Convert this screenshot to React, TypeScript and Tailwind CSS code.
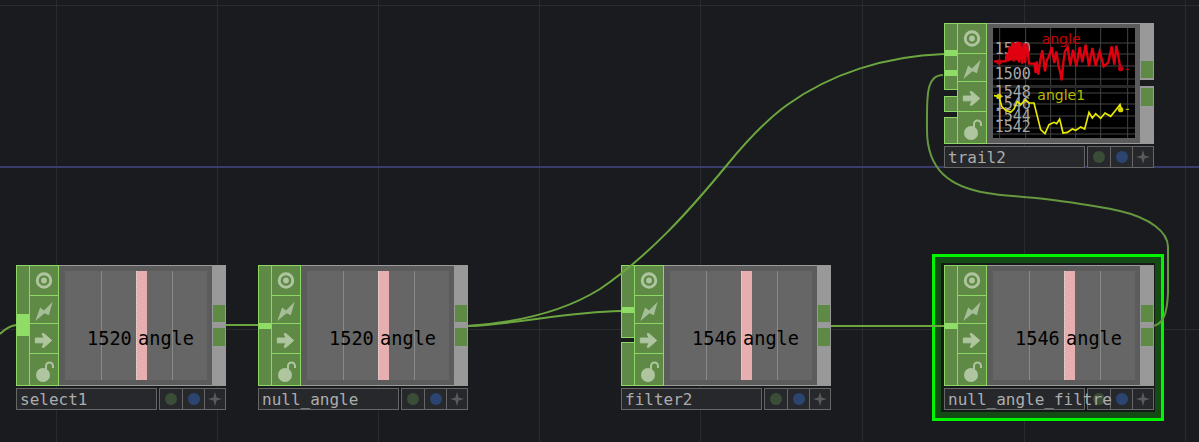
import React from "react";

const mono = "font-['DejaVu_Sans_Mono',monospace]";
const ic = "block h-full w-full blur-[0.4px]";

function Target() {
  return (
    <svg viewBox="0 0 28 30" className={ic}>
      <circle cx="14" cy="15" r="7" fill="none" stroke="#aec5a0" strokeWidth="3" />
      <circle cx="14" cy="15" r="3" fill="#aec5a0" />
    </svg>
  );
}
function Bolt() {
  return (
    <svg viewBox="0 0 28 28" className={ic}>
      <path d="M5 26 L10 12 L14 15 L23 6 L19 20 L14.5 18 Z" fill="#a5be97" />
    </svg>
  );
}
function Arrow() {
  return (
    <svg viewBox="0 0 28 30" className={ic}>
      <path d="M5 14.5 H14 L12 10 H14 L22 17 L14 24 H12 L14 19.5 H5 Z" fill="#aec5a0" stroke="#aec5a0" strokeLinejoin="round" />
    </svg>
  );
}
function Lock() {
  return (
    <svg viewBox="0 0 28 31" className={ic}>
      <circle cx="13" cy="21" r="7" fill="#aec5a0" />
      <path d="M16 15 V12 a3.5 3.5 0 0 1 7 0 V14" fill="none" stroke="#aec5a0" strokeWidth="2" />
    </svg>
  );
}

function IconColumn() {
  return (
    <div className="flex w-[30px] shrink-0 flex-col border border-[#8dd764] bg-[#5f8a45]">
      <div className="h-[30px] border-b border-[#8dd764]"><Target /></div>
      <div className="h-[28px] border-b border-[#8dd764]"><Bolt /></div>
      <div className="h-[30px] border-b border-[#8dd764]"><Arrow /></div>
      <div className="min-h-0 flex-1"><Lock /></div>
    </div>
  );
}

type Seg = { h: number; marks?: [number, number][] };

function Inputs({ segs }: { segs: Seg[] }) {
  return (
    <div className="flex w-[13px] shrink-0 flex-col justify-between">
      {segs.map((s, i) => (
        <div key={i} className="relative border border-r-0 border-[#8dd764] bg-[#5f8a45]" style={{ height: s.h }}>
          {s.marks?.map(([top, h], j) => (
            <div key={j} className="absolute inset-x-0 bg-[#8fdc66]" style={{ top, height: h }} />
          ))}
        </div>
      ))}
    </div>
  );
}

function NameBar({ name }: { name: string }) {
  return (
    <div className="mt-[2px] flex h-[22px] gap-[2px]">
      <div className={`${mono} relative z-10 w-[141px] shrink-0 whitespace-nowrap border border-[#666] bg-[#26282c] pl-[3px] text-[16px] leading-[21px] text-[#acacac]`}>
        {name}
      </div>
      <div className="flex flex-1 border border-[#666] bg-[#26282c]">
        <div className="flex w-[23px] items-center justify-center border-r border-[#666]">
          <div className="h-[12px] w-[12px] rounded-full bg-[#3a4d36] blur-[0.5px]" />
        </div>
        <div className="flex w-[22px] items-center justify-center border-r border-[#666]">
          <div className="h-[12px] w-[12px] rounded-full bg-[#2c4570] blur-[0.5px]" />
        </div>
        <div className="flex flex-1 items-center justify-center">
          <svg viewBox="0 0 14 14" className="h-[14px] w-[14px] blur-[0.4px]">
            <path d="M7 0 L8.6 5.4 L14 7 L8.6 8.6 L7 14 L5.4 8.6 L0 7 L5.4 5.4 Z" fill="#5a5a5a" />
          </svg>
        </div>
      </div>
    </div>
  );
}

function Value({ num }: { num: string }) {
  return (
    <div className="relative flex-1 border-y border-[#9a9a9a] bg-[#5c5c5c] py-[5px] pl-[6px] pr-[5px]">
      <div className="relative h-full bg-[#666666]">
        <div className="absolute inset-y-0 left-[36px] w-px bg-[#8a8a8a]" />
        <div className="absolute inset-y-0 left-[107px] w-px bg-[#8a8a8a]" />
        <div className="absolute inset-y-0 left-[71px] w-[11px] border-l border-dotted border-[#ddd] bg-[#e6aeae]" />
        <div className={`${mono} absolute left-[22px] top-[57px] whitespace-pre text-[18.6px] leading-[22px] text-black`}>{num}</div>
        <div className={`${mono} absolute left-[73px] top-[57px] whitespace-pre text-[18.6px] leading-[22px] text-black`}>angle</div>
      </div>
    </div>
  );
}

const red: [number, number][] = [
  [25,115],[60,115],[63,92],[68,115],[72,70],[76,112],[80,58],[84,115],[88,60],[92,112],[96,56],[100,118],[104,58],[109,122],[114,60],[118,120],[124,62],[130,122],[146,122],[150,150],[153,115],[158,155],[164,110],[170,82],[178,145],[184,110],[190,100],[198,72],[206,120],[212,85],[218,125],[224,150],[228,172],[234,110],[238,85],[246,72],[254,128],[262,80],[272,130],[282,72],[290,118],[300,65],[310,130],[320,75],[330,128],[342,85],[354,130],[368,118],[378,70],[386,125],[392,68],[398,100],[404,135],
];
const yellow: [number, number][] = [
  [25,218],[40,220],[48,250],[60,262],[75,268],[85,258],[95,235],[105,245],[120,230],[130,240],[145,240],[155,280],[165,320],[178,332],[190,305],[205,298],[213,302],[222,288],[232,330],[245,328],[260,318],[270,322],[285,312],[297,318],[310,268],[320,285],[330,272],[345,286],[358,270],[375,280],[390,262],[403,245],[408,262],
];
const pts = (a: [number, number][]) => a.map((p) => p.join(",")).join(" ");

function Trail() {
  const vx = [42, 120, 195, 270, 345, 426];
  const hy = [60, 93, 129, 168, 210, 243, 279, 315, 333];
  const nums: [string, number][] = [["1520", 92], ["1500", 168], ["1548", 222], ["1546", 257], ["1544", 293], ["1542", 328]];
  return (
    <div className="flex-1 border-y border-[#9a9a9a] bg-[#5c5c5c] pb-[5px] pl-[6px] pr-[5px] pt-[4px]">
      <svg viewBox="22 15 426 330" className="block h-[110px] w-[142px] bg-black">
        {vx.map((x) => <line key={x} x1={x} x2={x} y1="15" y2="345" stroke="#444" strokeWidth="3" />)}
        {hy.map((y) => <line key={y} x1="22" x2="448" y1={y} y2={y} stroke="#444" strokeWidth="3" />)}
        <rect x="22" y="186" width="426" height="9" fill="#2a2a2a" />
        <g fontFamily="'DejaVu Sans Mono',monospace" fontSize="45" fill="#a8a8a8">
          {nums.map(([t, y]) => <text key={t} x="27" y={y}>{t}</text>)}
        </g>
        <text x="168" y="62" fontFamily="'DejaVu Sans',sans-serif" fontSize="42" fill="#c40000">angle</text>
        <text x="155" y="232" fontFamily="'DejaVu Sans',sans-serif" fontSize="42" fill="#b8b800">angle1</text>
        <polyline points={pts(red)} fill="none" stroke="#e00010" strokeWidth="7" />
        <circle cx="40" cy="117" r="8" fill="#c40010" />
        <circle cx="405" cy="137" r="8" fill="#c40010" />
        <line x1="420" x2="430" y1="139" y2="139" stroke="#d00010" strokeWidth="3" />
        <polyline points={pts(yellow)} fill="none" stroke="#eaea00" strokeWidth="5" />
        <circle cx="40" cy="220" r="8" fill="#d8d800" />
        <circle cx="405" cy="260" r="8" fill="#d8d800" />
        <line x1="420" x2="430" y1="259" y2="259" stroke="#d8d800" strokeWidth="3" />
      </svg>
    </div>
  );
}

function Outputs({ split }: { split?: boolean }) {
  if (split) {
    return (
      <div className="flex w-[14px] shrink-0 flex-col justify-between">
        <div className="flex h-[57px] flex-col justify-end border-y border-[#9a9a9a] bg-[#999] px-px pb-px">
          <div className="h-[17px] bg-[#5f8a45]" />
        </div>
        <div className="h-[58px] border-y border-[#9a9a9a] bg-[#999] px-px pt-px">
          <div className="h-[18px] bg-[#5f8a45]" />
        </div>
      </div>
    );
  }
  return (
    <div className="flex w-[14px] shrink-0 flex-col gap-[6px] bg-[#999] px-px pt-[40px]">
      <div className="h-[17px] bg-[#5f8a45]" />
      <div className="h-[18px] bg-[#5f8a45]" />
    </div>
  );
}

function Node({
  left, top, name, segs, num, trail,
}: {
  left: number; top: number; name: string; segs: Seg[]; num?: string; trail?: boolean;
}) {
  return (
    <div className="absolute w-[210px]" style={{ left, top }}>
      <div className="flex h-[121px]">
        <Inputs segs={segs} />
        <IconColumn />
        {trail ? <Trail /> : <Value num={num ?? ""} />}
        <Outputs split={trail} />
      </div>
      <NameBar name={name} />
    </div>
  );
}

const vLines = [56, 217, 378, 539, 700, 862, 1024, 1185];

export default function App() {
  return (
    <div className="relative h-[442px] w-[1199px] overflow-hidden bg-[#191b1f]">
      {vLines.map((x) => (
        <div key={x} className="absolute inset-y-0 w-px bg-[#2a2b31]" style={{ left: x }} />
      ))}
      <div className="absolute inset-x-0 top-[5px] h-px bg-[#2a2b31]" />
      <div className="absolute inset-x-0 top-[329px] h-px bg-[#2a2b31]" />
      <div className="absolute inset-x-0 top-[166px] h-[2px] bg-[#3a3d6c]" />

      <div className="absolute left-[932px] top-[254px] h-[167px] w-[232px] border-[3px] border-[#00f500] bg-[#134d14] p-[6px]">
        <div className="h-full w-full bg-[#15191a]" />
      </div>

      <Node left={16} top={265} name="select1" num="1520" segs={[{ h: 121, marks: [[48, 22]] }]} />
      <Node left={258} top={265} name="null_angle" num="1520" segs={[{ h: 121, marks: [[57, 6]] }]} />
      <Node left={621} top={265} name="filter2" num="1546" segs={[{ h: 73, marks: [[41, 6]] }, { h: 44 }]} />
      <Node left={944} top={265} name="null_angle_filtre" num="1546" segs={[{ h: 121, marks: [[57, 6]] }]} />
      <Node left={944} top={23} name="trail2" trail segs={[{ h: 67, marks: [[26, 6], [46, 6]] }, { h: 16 }, { h: 27 }]} />

      <svg className="pointer-events-none absolute inset-0" width="1199" height="442" fill="none" stroke="#6ca63f" strokeWidth="2">
        <path d="M0 334 C5 329 9 326 16 325" />
        <path d="M226 325 H258" />
        <path d="M468 326 C520 324 565 312 621 311" />
        <path d="M468 326 C510 323 560 314 600 289 C650 255 690 210 727 165 C745 143 765 121 787 105 C830 74 885 56 944 54" />
        <path d="M831 326 H944" />
        <path d="M1153 326 C1163 324 1167 315 1168 293 L1168 247 C1168 232 1150 218 1120 211 C1100 206 1075 203 1053 200 C1020 196 1003 196 987 193 C950 187 927 170 927 130 C927 100 925 75 943 75" stroke="#66983f" />
      </svg>
    </div>
  );
}
